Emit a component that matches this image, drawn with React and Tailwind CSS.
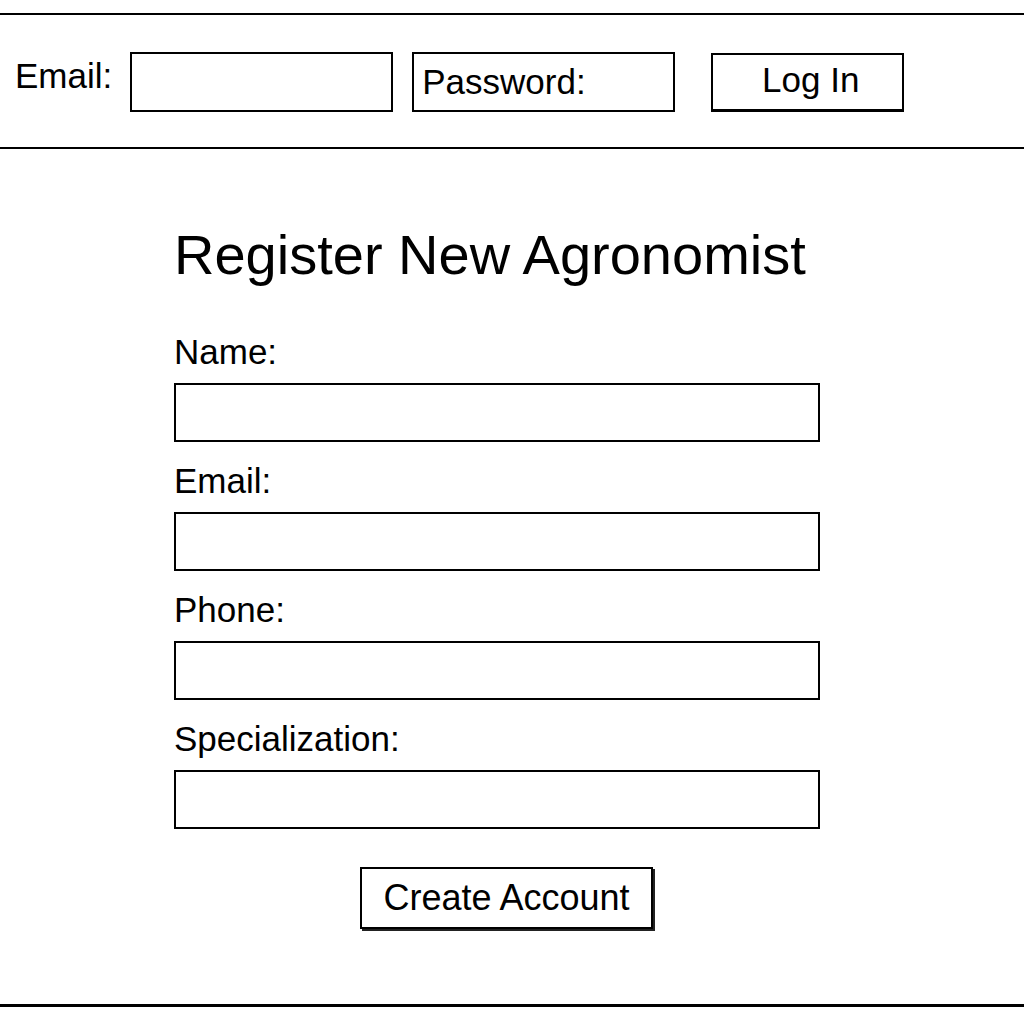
import React from "react";

const font = "font-['Liberation_Sans',Arial,sans-serif]";

function Field({ label, first }) {
  return (
    <div className={first ? "mt-[51px]" : "mt-[21px]"}>
      <label className="block text-[35px] leading-none text-black">{label}</label>
      <input
        type="text"
        className="mt-[14px] block h-[59px] w-[646px] border-2 border-black bg-white outline-none"
      />
    </div>
  );
}

export default function App() {
  return (
    <div className={`min-h-screen bg-white pt-[13px] text-black ${font}`}>
      <header className="flex h-[136px] items-center border-y-2 border-black pl-[15px] pt-[2px]">
        <span className="mb-[13px] text-[35px] leading-none">Email:</span>
        <input
          type="text"
          className="ml-[18px] h-[60px] w-[263px] border-2 border-black bg-white outline-none"
        />
        <input
          type="password"
          placeholder="Password:"
          className="ml-[19px] h-[60px] w-[263px] border-2 border-black bg-white pl-[8px] text-[35px] leading-none outline-none placeholder:text-black"
        />
        <button
          type="button"
          className="ml-[36px] h-[59px] w-[193px] border-2 border-b-[3px] border-black bg-white pb-[4px] pl-[6px] text-[35px] leading-none"
        >
          Log In
        </button>
      </header>

      <main className="pl-[174px]">
        <h1 className="pt-[78px] text-[56px] font-normal leading-none">Register New Agronomist</h1>
        <Field label="Name:" first />
        <Field label="Email:" />
        <Field label="Phone:" />
        <Field label="Specialization:" />
        <button
          type="button"
          className="ml-[186px] mt-[38px] h-[62px] w-[293px] border-2 border-black bg-white text-[36px] leading-none shadow-[2px_2px_0_#222]"
        >
          Create Account
        </button>
      </main>

      <div className="mt-[75px] border-t-[3px] border-black" />
    </div>
  );
}
